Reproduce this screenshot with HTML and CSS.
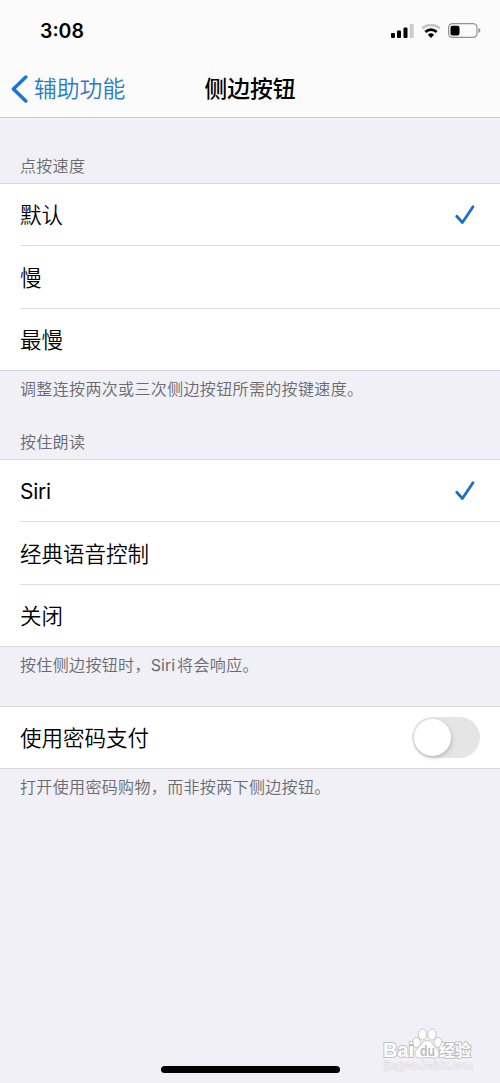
FILE: index.html
```html
<!DOCTYPE html>
<html lang="zh-CN">
<head>
  <meta charset="UTF-8" />
  <meta name="viewport" content="width=device-width, initial-scale=1.0"/>
  <title>侧边按钮</title>
  <link rel="stylesheet" href="styles.css">
</head>
<body>

  <header>
    <div class="status-bar">
      <span class="time">3:08</span>
      <div class="status-icons">
        <svg width="23" height="14" viewBox="0 0 23 14">
          <rect x="0" y="9" width="4" height="5" rx="1"/>
          <rect x="6" y="6.5" width="4" height="7.5" rx="1"/>
          <rect x="12.5" y="3.5" width="4" height="10.5" rx="1"/>
          <rect x="18.7" y="0" width="4" height="14" rx="1" fill="#ccc"/>
        </svg>
        <svg width="20" height="14" viewBox="0 0 20 14" fill="none">
          <path d="M1.2 4.6a12.6 12.6 0 0 1 17.6 0" stroke="#c8c8c9" stroke-width="2.8"/>
          <path d="M4.4 8a8 8 0 0 1 11.2 0" stroke="#000" stroke-width="2.7"/>
          <path d="M10 14 6.9 10.8a4.5 4.5 0 0 1 6.2 0z" fill="#000"/>
        </svg>
        <svg width="33" height="15" viewBox="0 0 33 15">
          <rect x=".6" y=".6" width="28.4" height="13.8" rx="4" fill="none" stroke="#929293" stroke-width="1.2"/>
          <rect x="2.5" y="2.7" width="9" height="9.8" rx="2"/>
          <path d="M30.5 5v5q1.9-.8 1.9-2.5T30.5 5z" fill="#929293"/>
        </svg>
      </div>
    </div>
    <nav>
      <a class="back">
        <svg width="17" height="28" viewBox="0 0 17 28">
          <path d="M14.8 2 2.4 14l12.4 12" fill="none" stroke="#1a76d2" stroke-width="3.5" stroke-linecap="round" stroke-linejoin="round"/>
        </svg>
        <span>辅助功能</span>
      </a>
      <h1>侧边按钮</h1>
    </nav>
  </header>

  <main>
    <h2>点按速度</h2>
    <ul>
      <li>默认
        <svg class="check" width="20" height="20" viewBox="0 0 20 20"><path d="m1.8 11.2 5.6 6.3L18 1.8"/></svg>
      </li>
      <li>慢</li>
      <li>最慢</li>
    </ul>
    <p>调整连按两次或三次侧边按钮所需的按键速度。</p>

    <h2 class="second">按住朗读</h2>
    <ul>
      <li><span class="latin">Siri</span>
        <svg class="check" width="20" height="20" viewBox="0 0 20 20"><path d="m1.8 11.2 5.6 6.3L18 1.8"/></svg>
      </li>
      <li>经典语音控制</li>
      <li>关闭</li>
    </ul>
    <p class="before-pay">按住侧边按钮时，<span class="latin">Siri</span>将会响应。</p>

    <ul>
      <li><span class="label">使用密码支付</span> <span class="switch"></span></li>
    </ul>
    <p>打开使用密码购物，而非按两下侧边按钮。</p>
  </main>

  <div class="watermark">
    <svg width="92" height="46" viewBox="0 0 92 46">
      <g fill="#fff" stroke="#c6c6ca" stroke-width="1">
        <ellipse cx="34.5" cy="14.5" rx="4" ry="5"/>
        <ellipse cx="40.5" cy="6.5" rx="4.2" ry="5.5"/>
        <ellipse cx="50" cy="6.5" rx="4.2" ry="5.5"/>
        <ellipse cx="56" cy="14.5" rx="4" ry="5"/>
        <path d="M45 12.5c4 0 5.5 4 9 7.5 6 6 2.5 11-3.5 10-3-.5-8-.5-11 0-6 1-9.5-4-3.500-10C39.5 16.5 41 12.5 45 12.5z"/>
      </g>
      <g class="outline">
        <text x="1" y="29" font-size="20" textLength="31" lengthAdjust="spacingAndGlyphs">Bai</text>
        <text x="57" y="28" font-size="16" textLength="32">经验</text>
      </g>
      <text class="du" x="38" y="28" font-size="14" textLength="15" lengthAdjust="spacingAndGlyphs">du</text>
      <text class="url" x="2" y="41" font-size="11" textLength="89">jingyan.baidu.com</text>
    </svg>
  </div>
  <div class="home-bar"></div>

</body>
</html>
```

FILE: styles.css
```css
* {
  box-sizing: border-box;
  margin: 0;
  padding: 0;
}

body {
  font-family: 'Noto Sans CJK SC', sans-serif;
  font-weight: 350;
  background: #f0f0f6;
  color: #000;
  height: 1083px;
  position: relative;
  overflow: hidden;
}

/* Header */
header {
  height: 118px;
  background: #fbfbfc;
  border-bottom: 1px solid #cdcdd0;
}

.status-bar {
  height: 60px;
  padding: 1px 19px 0 40px;
  display: flex;
  align-items: center;
  justify-content: space-between;
}

.time {
  font-family: Inter, sans-serif;
  font-size: 19.5px;
  font-weight: 600;
}

.status-icons {
  display: flex;
  align-items: center;
  gap: 7px;
}

nav {
  height: 57px;
  display: grid;
  grid-template-columns: 1fr auto 1fr;
  align-items: center;
}

.back {
  display: flex;
  align-items: center;
  gap: 6px;
  padding-left: 11px;
  color: #2a7bc8;
  font-size: 22.8px;
  line-height: 32px;
}

.back span {
  padding-bottom: 1px;
}

h1 {
  padding-bottom: 1px;
  font-size: 22.8px;
  font-weight: 500;
  line-height: 32px;
}

/* Setting groups */
h2 {
  height: 65px;
  padding: 35px 20px 0;
  font-size: 16px;
  font-weight: 350;
  line-height: 24px;
  letter-spacing: 0.3px;
  color: #6a6a6f;
}

h2.second {
  height: 52px;
  padding-top: 22px;
}

ul {
  list-style: none;
  background: #fff;
  border-top: 1px solid #d8d8da;
  border-bottom: 1px solid #d8d8da;
}

li {
  height: 62px;
  margin-left: 20px;
  padding: 0 20px 2px 0;
  display: flex;
  align-items: center;
  justify-content: space-between;
  font-size: 21.5px;
  border-bottom: 1px solid #dedee0;
}

li:nth-child(2) {
  height: 63px;
}

li:last-child {
  height: 61px;
  border-bottom: none;
}

li:only-child {
  padding-bottom: 0;
}

.label {
  padding-bottom: 2px;
}

.latin {
  font-family: Inter, sans-serif;
  font-weight: 400;
  letter-spacing: -0.3px;
}

li .latin {
  padding-top: 4px;
  font-size: 21px;
}

.check {
  margin: 2px 5px 0 0;
}

.check path {
  fill: none;
  stroke: #1a70c6;
  stroke-width: 2.8;
  stroke-linecap: round;
  stroke-linejoin: round;
}

p {
  height: 36px;
  padding: 5px 20px 0;
  font-size: 16px;
  line-height: 24px;
  letter-spacing: 0.35px;
  color: #6a6a6f;
}

p.before-pay {
  height: 59px;
}

p .latin {
  padding-right: 2px;
  letter-spacing: 0;
}

.switch {
  width: 68px;
  height: 41px;
  padding: 2px;
  border-radius: 21px;
  background: #e5e5e6;
}

.switch::before {
  content: "";
  display: block;
  width: 37px;
  height: 37px;
  border-radius: 50%;
  background: #fff;
  box-shadow: 1px 2px 4px rgba(0, 0, 0, 0.18);
}

/* Overlays at the bottom */
.watermark {
  position: absolute;
  left: 382px;
  top: 1028px;
}

.watermark text {
  font-family: 'Liberation Sans', 'Noto Sans CJK SC', sans-serif;
  font-weight: 700;
}

.outline text {
  fill: #fff;
  stroke: #bebec2;
  stroke-width: 1.8px;
  paint-order: stroke;
}

.watermark .du {
  fill: #bcbcc1;
}

.watermark .url {
  fill: #f8f8fb;
  stroke: #d5d5da;
  stroke-width: 1px;
  paint-order: stroke;
  font-weight: 400;
}

.home-bar {
  position: absolute;
  left: 161px;
  top: 1066px;
  width: 179px;
  height: 7px;
  border-radius: 4px;
  background: #000;
}
```
